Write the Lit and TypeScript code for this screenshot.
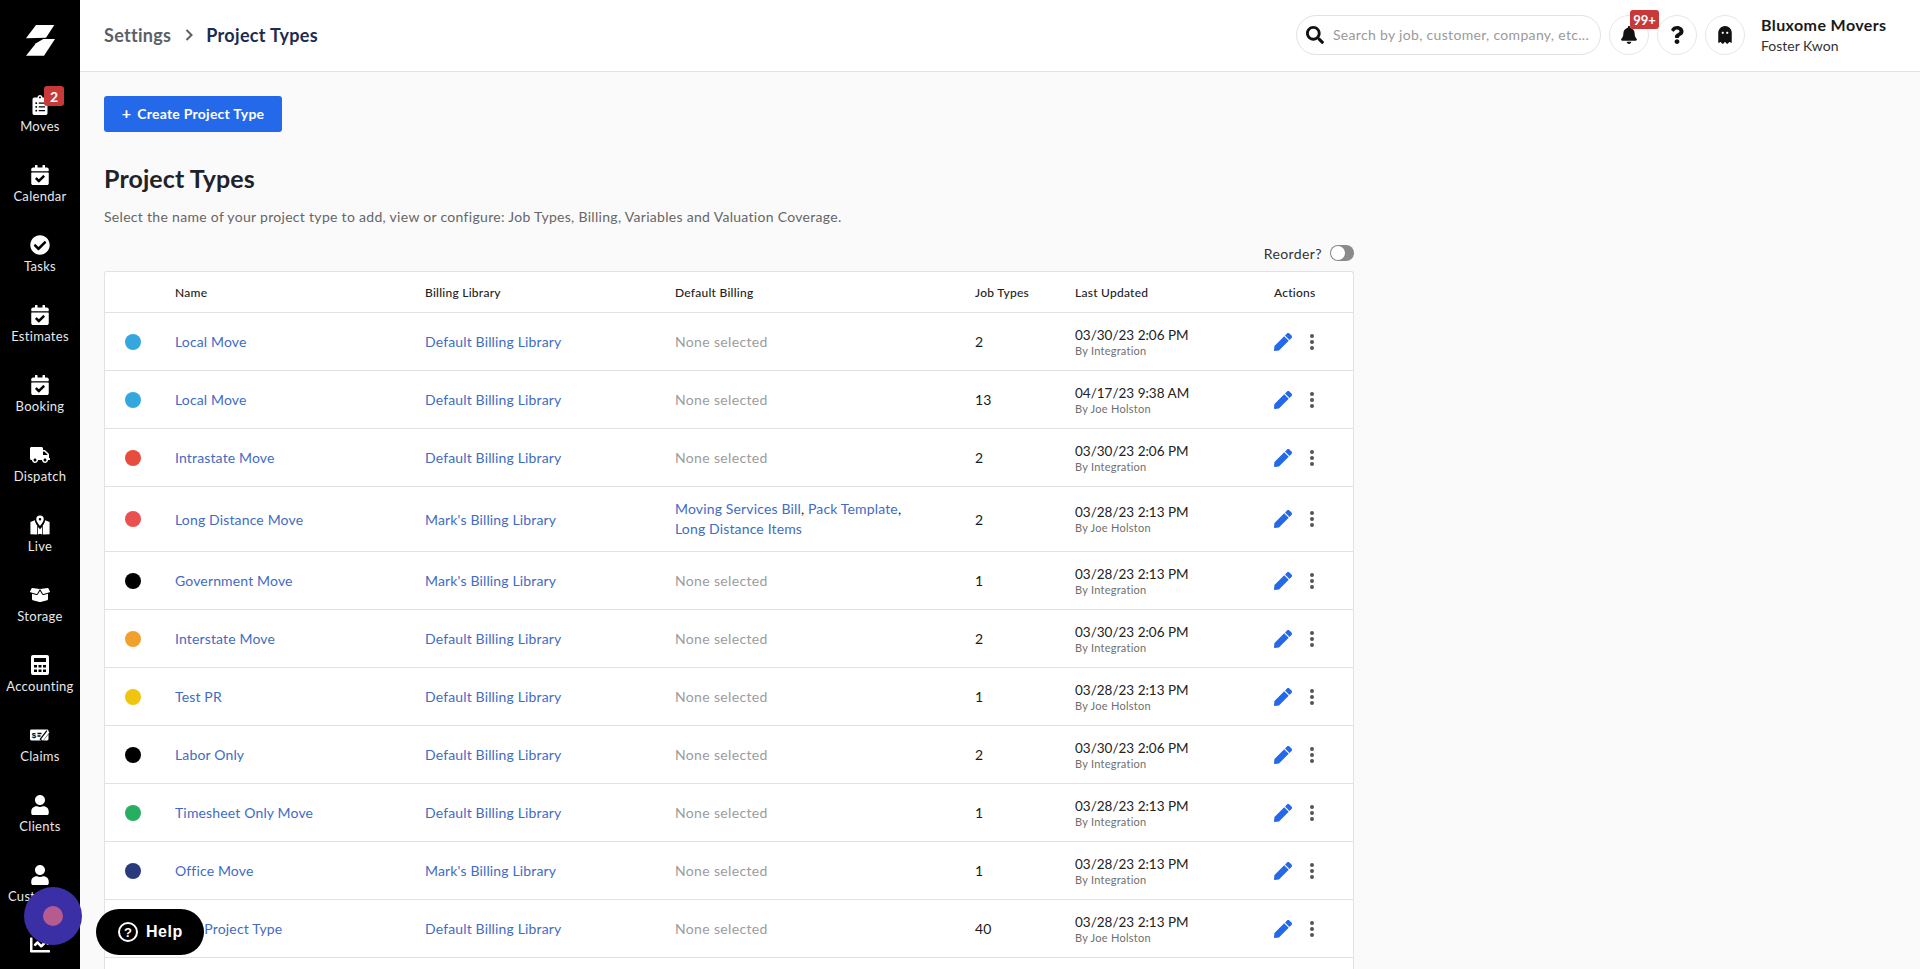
import { LitElement, html, css } from 'lit';
import { customElement } from 'lit/decorators.js';

const icon = (vb: string, d: string) => html`<svg viewBox=${vb} fill="currentColor" aria-hidden="true"><path d=${d}></path></svg>`;

const calendarCheck = icon('0 0 448 512', 'M436 160H12c-6.627 0-12-5.373-12-12v-36c0-26.51 21.49-48 48-48h48V12c0-6.627 5.373-12 12-12h40c6.627 0 12 5.373 12 12v52h128V12c0-6.627 5.373-12 12-12h40c6.627 0 12 5.373 12 12v52h48c26.51 0 48 21.49 48 48v36c0 6.627-5.373 12-12 12zM12 192h424c6.627 0 12 5.373 12 12v260c0 26.51-21.49 48-48 48H48c-26.51 0-48-21.49-48-48V204c0-6.627 5.373-12 12-12zm333.296 95.947l-28.169-28.398c-4.667-4.705-12.265-4.736-16.97-.068L194.12 364.665l-45.98-46.352c-4.667-4.705-12.266-4.736-16.971-.068l-28.397 28.17c-4.705 4.667-4.736 12.265-.068 16.97l82.601 83.269c4.667 4.705 12.265 4.736 16.97.068l142.953-141.805c4.705-4.667 4.736-12.265.068-16.97z');
const user = icon('0 0 448 512', 'M224 256c70.7 0 128-57.3 128-128S294.7 0 224 0 96 57.3 96 128s57.3 128 128 128zm89.6 32h-16.7c-22.2 10.2-46.9 16-72.9 16s-50.6-5.8-72.9-16h-16.7C60.2 288 0 348.2 0 422.4V464c0 26.5 21.5 48 48 48h352c26.5 0 48-21.5 48-48v-41.6c0-74.2-60.2-134.4-134.4-134.4z');
const pen = icon('0 0 512 512', 'M290.74 93.24l128.02 128.02-277.99 277.99-114.14 12.6C11.35 513.54-1.56 500.62.14 485.34l12.7-114.22 277.9-278.88zm207.2-19.06l-60.11-60.11c-18.75-18.75-49.16-18.75-67.91 0l-56.55 56.55 128.02 128.02 56.55-56.55c18.75-18.76 18.75-49.16 0-67.91z');
const search = icon('0 0 512 512', 'M505 442.7L405.3 343c-4.5-4.5-10.6-7-17-7H372c27.6-35.3 44-79.7 44-128C416 93.1 322.9 0 208 0S0 93.1 0 208s93.1 208 208 208c48.3 0 92.7-16.4 128-44v16.3c0 6.4 2.5 12.5 7 17l99.7 99.7c9.4 9.4 24.6 9.4 33.9 0l28.3-28.3c9.4-9.4 9.4-24.6.1-34zM208 336c-70.7 0-128-57.2-128-128 0-70.7 57.2-128 128-128 70.7 0 128 57.2 128 128 0 70.7-57.2 128-128 128z');
const bell = icon('0 0 448 512', 'M224 512c35.32 0 63.97-28.65 63.97-64H160.03c0 35.35 28.65 64 63.97 64zm215.39-149.71c-19.32-20.76-55.47-51.99-55.47-154.29 0-77.7-54.48-139.9-127.94-155.16V32c0-17.67-14.32-32-31.98-32s-31.98 14.33-31.98 32v20.84C118.56 68.1 64.08 130.3 64.08 208c0 102.3-36.15 133.53-55.47 154.29-6 6.45-8.66 14.16-8.61 21.71.11 16.4 12.98 32 32.1 32h383.8c19.12 0 32-15.6 32.1-32 .05-7.55-2.61-15.27-8.61-21.71z');
const question = icon('0 0 384 512', 'M202.021 0C122.202 0 70.503 32.703 29.914 91.026c-7.363 10.58-5.093 25.086 5.178 32.874l43.138 32.709c10.373 7.865 25.132 6.026 33.253-4.148 25.049-31.381 43.63-49.449 82.757-49.449 30.764 0 68.816 19.799 68.816 49.631 0 22.552-18.617 34.134-48.993 51.164-35.423 19.86-82.299 44.576-82.299 106.405V320c0 13.255 10.745 24 24 24h72.471c13.255 0 24-10.745 24-24v-5.773c0-42.86 125.268-44.645 125.268-160.627C377.504 66.256 286.902 0 202.021 0zM192 373.459c-38.196 0-69.271 31.075-69.271 69.271 0 38.195 31.075 69.27 69.271 69.27s69.271-31.075 69.271-69.271-31.075-69.27-69.271-69.27z');
const ghost = icon('0 0 384 512', 'M186.1.09C81.01 3.24 0 94.92 0 200.05v263.92c0 14.26 17.23 21.39 27.31 11.31l24.92-18.53c6.66-4.95 16-3.99 21.51 2.21l42.95 48.35c6.25 6.25 16.38 6.25 22.63 0l40.72-45.85c6.37-7.17 17.56-7.17 23.92 0l40.72 45.85c6.25 6.25 16.38 6.25 22.63 0l42.95-48.35c5.51-6.2 14.85-7.16 21.51-2.21l24.92 18.53c10.08 10.08 27.31 2.94 27.31-11.31V192C384 84 294.83-3.17 186.1.09zM128 224c-17.67 0-32-14.33-32-32s14.33-32 32-32 32 14.33 32 32-14.33 32-32 32zm128 0c-17.67 0-32-14.33-32-32s14.33-32 32-32 32 14.33 32 32-14.33 32-32 32z');

const claimsIcon = html`<svg viewBox="0 0 20 14" aria-hidden="true">
  <path fill="currentColor" d="M1.5 1.5h15.5c.8 0 1.5.6 1.5 1.4v8.2c0 .8-.7 1.4-1.5 1.4H1.5C.7 12.5 0 11.900 0 11.100V2.900C0 2.100.7 1.500 1.500 1.500z"></path>
  <text x="1.700" y="10" font-size="8" font-weight="700" font-family="Liberation Sans, sans-serif" fill="#000">$</text>
  <path stroke="#000" stroke-width="1.300" d="M7.500 5.500h4M7.500 8h3"></path>
  <path stroke="#000" stroke-width="4" d="M11 12.500L18 3.500"></path>
  <path stroke="currentColor" stroke-width="2.400" d="M12 12L18.500 3.500"></path>
</svg>`;

const mapIcon = html`<svg viewBox="0 0 24 24" fill="currentColor" aria-hidden="true">
  <path d="M12 0.500a4.500 4.500 0 0 0-4.500 4.500c0 2.800 4.500 8 4.500 8s4.500-5.200 4.500-8A4.500 4.500 0 0 0 12 .500zm0 3a1.500 1.500 0 1 1 0 3 1.500 1.500 0 0 1 0-3z"></path>
  <path d="M.500 8.500l5.200-2.200c.4 2.400 1.800 5 3 6.600V23.500L.500 23zM9.600 14.300c.9 1.200 1.800 2.200 2.400 2.800.6-.6 1.500-1.600 2.400-2.800v9.200l-2.400-1-2.400 1zM15.300 12.900c1.200-1.600 2.600-4.200 3-6.600l5.200 2.200V23l-8.200.5z"></path>
</svg>`;

const nav = [
  { label: 'Moves', badge: '2', svg: icon('0 0 384 512', 'M336 64h-80c0-35.3-28.7-64-64-64s-64 28.7-64 64H48C21.5 64 0 85.5 0 112v352c0 26.5 21.5 48 48 48h288c26.500 0 48-21.500 48-48V112c0-26.500-21.500-48-48-48zM96 424c-13.300 0-24-10.700-24-24s10.700-24 24-24 24 10.700 24 24-10.700 24-24 24zm0-96c-13.300 0-24-10.700-24-24s10.700-24 24-24 24 10.700 24 24-10.700 24-24 24zm0-96c-13.300 0-24-10.700-24-24s10.700-24 24-24 24 10.700 24 24-10.700 24-24 24zm96-192c13.300 0 24 10.700 24 24s-10.700 24-24 24-24-10.700-24-24 10.700-24 24-24zm128 368c0 4.400-3.600 8-8 8H168c-4.400 0-8-3.600-8-8v-16c0-4.400 3.600-8 8-8h144c4.400 0 8 3.600 8 8v16zm0-96c0 4.400-3.600 8-8 8H168c-4.400 0-8-3.600-8-8v-16c0-4.400 3.600-8 8-8h144c4.400 0 8 3.600 8 8v16zm0-96c0 4.400-3.600 8-8 8H168c-4.400 0-8-3.600-8-8v-16c0-4.400 3.600-8 8-8h144c4.400 0 8 3.600 8 8v16z') },
  { label: 'Calendar', svg: calendarCheck },
  { label: 'Tasks', svg: icon('0 0 512 512', 'M504 256c0 136.967-111.033 248-248 248S8 392.967 8 256 119.033 8 256 8s248 111.033 248 248zM227.314 387.314l184-184c6.248-6.248 6.248-16.379 0-22.627l-22.627-22.627c-6.248-6.249-16.379-6.249-22.628 0L216 308.118l-70.059-70.059c-6.248-6.248-16.379-6.248-22.628 0l-22.627 22.627c-6.248 6.248-6.248 16.379 0 22.627l104 104c6.249 6.25 16.379 6.25 22.628.001z') },
  { label: 'Estimates', svg: calendarCheck },
  { label: 'Booking', svg: calendarCheck },
  { label: 'Dispatch', svg: icon('0 0 640 512', 'M624 352h-16V243.9c0-12.7-5.1-24.9-14.1-33.9L494 110.100c-9-9-21.200-14.100-33.900-14.100H416V48c0-26.500-21.500-48-48-48H48C21.500 0 0 21.500 0 48v320c0 26.500 21.500 48 48 48h16c0 53 43 96 96 96s96-43 96-96h128c0 53 43 96 96 96s96-43 96-96h48c8.800 0 16-7.200 16-16v-32c0-8.800-7.200-16-16-16zM160 464c-26.500 0-48-21.500-48-48s21.500-48 48-48 48 21.500 48 48-21.500 48-48 48zm320 0c-26.500 0-48-21.500-48-48s21.500-48 48-48 48 21.500 48 48-21.500 48-48 48zm80-208H416V144h44.100l99.900 99.900V256z') },
  { label: 'Live', svg: mapIcon },
  { label: 'Storage', svg: icon('0 0 640 512', 'M425.700 256c-16.900 0-32.800-9-41.400-23.400L320 126l-64.200 106.600c-8.700 14.500-24.600 23.500-41.500 23.500-4.500 0-9-.6-13.300-1.900L64 215v178c0 14.700 10 27.500 24.200 31l216.200 54.100c10.200 2.500 20.900 2.500 31 0L551.800 424c14.200-3.600 24.200-16.400 24.200-31V215l-137 39.100c-4.300 1.300-8.800 1.900-13.300 1.900zm212.600-112.200L586.800 41c-3.100-6.200-9.800-9.800-16.700-8.900L320 64l91.700 152.100c3.800 6.300 11.400 9.300 18.500 7.300l197.900-56.500c9.900-2.900 14.700-13.900 10.200-23.100zM53.200 41L1.700 143.800c-4.600 9.200.3 20.200 10.100 23l197.900 56.500c7.100 2 14.700-1 18.500-7.300L320 64 69.800 32.100c-6.900-.8-13.500 2.700-16.600 8.900z') },
  { label: 'Accounting', svg: html`<svg viewBox="0 0 18 20" fill="currentColor" aria-hidden="true"><path fill-rule="evenodd" d="M2 0h14a2 2 0 0 1 2 2v16a2 2 0 0 1-2 2H2a2 2 0 0 1-2-2V2a2 2 0 0 1 2-2zM3 3v4h12V3zM3 10v2.500h3V10zM7.500 10v2.500h3V10zM12 10v2.500h3V10zM3 14.500V17h3v-2.500zM7.500 14.500V17h3v-2.500zM12 14.500V17h3v-2.500z"></path></svg>` },
  { label: 'Claims', svg: claimsIcon },
  { label: 'Clients', svg: user },
  { label: 'Customers', svg: user },
  { label: '', svg: icon('0 0 512 512', 'M496 384H64V80c0-8.840-7.160-16-16-16H16C7.160 64 0 71.160 0 80v336c0 17.670 14.330 32 32 32h464c8.840 0 16-7.160 16-16v-32c0-8.840-7.160-16-16-16zM464 96H345.940c-21.380 0-32.090 25.850-16.970 40.970l32.400 32.400L288 242.750l-73.370-73.370c-12.500-12.500-32.760-12.500-45.250 0l-68.690 68.690c-6.250 6.250-6.250 16.380 0 22.630l22.620 22.620c6.250 6.250 16.380 6.250 22.630 0L192 237.250l73.370 73.370c12.500 12.500 32.760 12.500 45.250 0l96-96 32.400 32.400c15.120 15.120 40.970 4.410 40.970-16.970V112c.01-8.840-7.150-16-15.990-16z') },
];

const INT = 'By Integration';
const JOE = 'By Joe Holston';
const DEF = 'Default Billing Library';
const MARK = "Mark's Billing Library";

const rows = [
  { color: '#34a8de', name: 'Local Move', lib: DEF, jobs: '2', date: '03/30/23 2:06 PM', by: INT },
  { color: '#34a8de', name: 'Local Move', lib: DEF, jobs: '13', date: '04/17/23 9:38 AM', by: JOE },
  { color: '#e74c3c', name: 'Intrastate Move', lib: DEF, jobs: '2', date: '03/30/23 2:06 PM', by: INT },
  { color: '#eb5050', name: 'Long Distance Move', lib: MARK, jobs: '2', date: '03/28/23 2:13 PM', by: JOE, billing: ['Moving Services Bill', 'Pack Template', 'Long Distance Items'] },
  { color: '#000000', name: 'Government Move', lib: MARK, jobs: '1', date: '03/28/23 2:13 PM', by: INT },
  { color: '#f2a02d', name: 'Interstate Move', lib: DEF, jobs: '2', date: '03/30/23 2:06 PM', by: INT },
  { color: '#f1c40f', name: 'Test PR', lib: DEF, jobs: '1', date: '03/28/23 2:13 PM', by: JOE },
  { color: '#000000', name: 'Labor Only', lib: DEF, jobs: '2', date: '03/30/23 2:06 PM', by: INT },
  { color: '#27ae60', name: 'Timesheet Only Move', lib: DEF, jobs: '1', date: '03/28/23 2:13 PM', by: INT },
  { color: '#2a3b7d', name: 'Office Move', lib: MARK, jobs: '1', date: '03/28/23 2:13 PM', by: INT },
  { color: '#2a3b7d', name: 'Test Project Type', lib: DEF, jobs: '40', date: '03/28/23 2:13 PM', by: JOE },
];

@customElement('app-root')
export class AppRoot extends LitElement {
  static override styles = css`
    :host {
      display: flex;
      height: 100vh;
      overflow: hidden;
      position: relative;
      font-family: Lato, 'Noto Sans', sans-serif;
      color: #1a1a1a;
      background: #fafafa;
    }
    svg { display: block; width: 100%; height: 100%; }
    a { color: #3f6cc4; text-decoration: none; }

    .sidebar {
      flex: 0 0 80px;
      background: #000;
      color: #fff;
      overflow: hidden;
    }
    .logo {
      height: 71px;
      box-sizing: border-box;
      padding-top: 9px;
      display: flex;
      align-items: center;
      justify-content: center;
    }
    .logo svg { width: 29px; height: 31px; }
    .nav { padding-top: 15px; }
    .nav-item {
      height: 70px;
      display: flex;
      flex-direction: column;
      align-items: center;
      padding-top: 9px;
      box-sizing: border-box;
      font-size: 13px;
      line-height: 15px;
      letter-spacing: 0.3px;
      color: #e8e8e8;
    }
    .nav-icon { position: relative; width: 20px; height: 20px; color: #fff; margin-bottom: 4px; }
    .nav-badge {
      position: absolute;
      left: 14px;
      top: -9px;
      width: 20px;
      height: 20px;
      border-radius: 3px;
      background: #c83a3a;
      color: #fff;
      font-size: 14px;
      font-weight: 700;
      display: flex;
      align-items: center;
      justify-content: center;
      letter-spacing: 0;
    }

    .main { flex: 1; min-width: 0; display: flex; flex-direction: column; }
    .header {
      flex: 0 0 72px;
      box-sizing: border-box;
      background: #fff;
      border-bottom: 1px solid #e2e2e2;
      display: flex;
      align-items: center;
      padding: 0 32px 1px 24px;
    }
    .crumbs { display: flex; align-items: center; font-size: 18px; font-weight: 700; letter-spacing: 0.3px; flex: 1; }
    .crumb-parent { color: #5c5f66; }
    .crumb-sep { width: 8px; height: 12px; margin: 0 13px 0 14px; }
    .crumb-current { color: #1b2c4f; }
    .search {
      width: 305px;
      height: 40px;
      box-sizing: border-box;
      border: 1px solid #e2e2e2;
      border-radius: 20px;
      display: flex;
      align-items: center;
      padding-left: 9px;
      gap: 9px;
      font-size: 14px;
      letter-spacing: 0.32px;
      color: #9a9a9a;
      white-space: nowrap;
    }
    .search-text { padding-bottom: 2px; }
    .search-icon { width: 18px; height: 18px; color: #111; flex: none; }
    .round {
      position: relative;
      width: 40px;
      height: 40px;
      box-sizing: border-box;
      border: 1px solid #e6e6e6;
      border-radius: 50%;
      margin-left: 8px;
      display: flex;
      align-items: center;
      justify-content: center;
      color: #111;
    }
    .round span.ic { width: 16px; height: 18px; display: block; }
    .round-badge {
      position: absolute;
      left: 20px;
      top: -6px;
      width: 29px;
      height: 19px;
      border-radius: 3px;
      background: #c83a3a;
      color: #fff;
      font-size: 13px;
      font-weight: 700;
      display: flex;
      align-items: center;
      justify-content: center;
    }
    .who { margin-left: 16px; width: 127px; white-space: nowrap; }
    .company { font-size: 16px; font-weight: 700; line-height: 20px; letter-spacing: 0.4px; color: #1a1a1a; }
    .person { font-size: 14px; line-height: 21px; color: #333; }

    .content { flex: 1; overflow: hidden; padding: 24px 24px 0; }
    .create {
      width: 178px;
      height: 36px;
      box-sizing: border-box;
      padding-bottom: 2px;
      border-radius: 3px;
      background: #2469ea;
      color: #fff;
      font-size: 14px;
      font-weight: 700;
      letter-spacing: 0.25px;
      display: flex;
      align-items: center;
      justify-content: center;
      gap: 6px;
    }
    .plus { font-size: 16px; line-height: 1; }
    h1 { margin: 29px 0 0; font-size: 25px; line-height: 34px; font-weight: 700; color: #1f2329; letter-spacing: 0.1px; }
    .lead { margin: 12px 0 0; font-size: 14px; line-height: 20px; letter-spacing: 0.3px; color: #666; }
    .reorder-row {
      width: 1250px;
      margin-top: 16px;
      height: 20px;
      display: flex;
      align-items: center;
      justify-content: flex-end;
      gap: 8px;
      font-size: 14px;
      letter-spacing: 0.4px;
      color: #333;
    }
    .toggle { position: relative; width: 24px; height: 16px; border-radius: 8px; background: #8a8a8a; }
    .knob {
      position: absolute;
      left: 1px;
      top: 1px;
      width: 14px;
      height: 14px;
      border-radius: 50%;
      background: #fff;
    }

    .table {
      width: 1250px;
      margin-top: 8px;
      box-sizing: border-box;
      background: #fff;
      border: 1px solid #e2e2e2;
      border-bottom: none;
      border-radius: 3px 3px 0 0;
    }
    .row {
      display: grid;
      grid-template-columns: 70px 250px 250px 300px 100px 199px 1fr;
      align-items: center;
      min-height: 58px;
      box-sizing: border-box;
      border-bottom: 1px solid #e2e2e2;
      font-size: 14px;
      letter-spacing: 0.15px;
      color: #1a1a1a;
    }
    .row.head { min-height: 41px; font-size: 12px; font-weight: 500; letter-spacing: 0.25px; color: #222; }
    .row.tall { min-height: 65px; }
    .row.empty { border-bottom: none; }
    .dot { width: 16px; height: 16px; border-radius: 50%; margin-left: 20px; }
    .none { color: #9c9c9c; letter-spacing: 0.35px; }
    .billing { line-height: 20px; padding-right: 60px; }
    .date { font-size: 13.500px; letter-spacing: 0; line-height: 18px; color: #222; }
    .by { font-size: 11px; letter-spacing: 0.25px; line-height: 14px; color: #6f6f6f; }
    .actions { display: flex; align-items: center; }
    .edit { width: 18px; height: 18px; color: #2469ea; margin-right: 18px; }
    .more { display: flex; flex-direction: column; gap: 2px; width: 4px; }
    .more i { display: block; width: 4px; height: 4px; border-radius: 50%; background: #555; }

    .beacon {
      position: absolute;
      left: 24px;
      top: 887px;
      width: 58px;
      height: 58px;
      border-radius: 50%;
      background: #3b2fa6;
      display: flex;
      align-items: center;
      justify-content: center;
    }
    .beacon i { display: block; width: 20px; height: 20px; border-radius: 50%; background: #b65b90; }
    .help {
      position: absolute;
      left: 96px;
      top: 909px;
      width: 108px;
      height: 46px;
      box-sizing: border-box;
      border-radius: 23px;
      background: #000;
      color: #fff;
      display: flex;
      align-items: center;
      padding-left: 22px;
      gap: 8px;
      font-family: 'Liberation Sans', Arial, sans-serif;
      font-size: 16px;
      font-weight: 700;
      letter-spacing: 0.5px;
    }
    .help-q {
      width: 20px;
      height: 20px;
      box-sizing: border-box;
      border: 2px solid #fff;
      border-radius: 50%;
      font-size: 13px;
      letter-spacing: 0;
      display: flex;
      align-items: center;
      justify-content: center;
    }
  `;

  renderRow(r: (typeof rows)[number]) {
    const billing = (r as { billing?: string[] }).billing;
    return html`
      <div class="row ${billing ? 'tall' : ''}">
        <div class="dot" style="background:${r.color}"></div>
        <a>${r.name}</a>
        <a>${r.lib}</a>
        ${billing
          ? html`<div class="billing">${billing.map((b, i) => html`<a>${b}</a>${i < billing.length - 1 ? ', ' : ''}`)}</div>`
          : html`<div class="none">None selected</div>`}
        <div>${r.jobs}</div>
        <div>
          <div class="date">${r.date}</div>
          <div class="by">${r.by}</div>
        </div>
        <div class="actions">
          <div class="edit">${pen}</div>
          <div class="more"><i></i><i></i><i></i></div>
        </div>
      </div>
    `;
  }

  override render() {
    return html`
      <aside class="sidebar">
        <div class="logo">
          <svg viewBox="0 0 29 31" fill="#fff" aria-hidden="true">
            <path d="M10 0H28.300L20 12.700L0 13.300Z"></path>
            <path d="M17.300 14H29L18 30.700H0L10 18.300Z"></path>
          </svg>
        </div>
        <nav class="nav">
          ${nav.map(n => html`
            <div class="nav-item">
              <div class="nav-icon">
                ${n.svg}
                ${n.badge ? html`<span class="nav-badge">${n.badge}</span>` : ''}
              </div>
              <span>${n.label}</span>
            </div>
          `)}
        </nav>
      </aside>
      <div class="main">
        <header class="header">
          <div class="crumbs">
            <span class="crumb-parent">Settings</span>
            <svg class="crumb-sep" viewBox="0 0 8 12" fill="none" stroke="#5c5f66" stroke-width="2"><path d="M1.500 1L6.500 6L1.500 11"></path></svg>
            <span class="crumb-current">Project Types</span>
          </div>
          <div class="search">
            <span class="search-icon">${search}</span>
            <span class="search-text">Search by job, customer, company, etc...</span>
          </div>
          <div class="round">
            <span class="ic">${bell}</span>
            <span class="round-badge">99+</span>
          </div>
          <div class="round"><span class="ic">${question}</span></div>
          <div class="round"><span class="ic">${ghost}</span></div>
          <div class="who">
            <div class="company">Bluxome Movers</div>
            <div class="person">Foster Kwon</div>
          </div>
        </header>
        <main class="content">
          <div class="create"><span class="plus">+</span><span>Create Project Type</span></div>
          <h1>Project Types</h1>
          <p class="lead">Select the name of your project type to add, view or configure: Job Types, Billing, Variables and Valuation Coverage.</p>
          <div class="reorder-row">
            <span>Reorder?</span>
            <div class="toggle"><div class="knob"></div></div>
          </div>
          <div class="table">
            <div class="row head">
              <div></div>
              <div>Name</div>
              <div>Billing Library</div>
              <div>Default Billing</div>
              <div>Job Types</div>
              <div>Last Updated</div>
              <div>Actions</div>
            </div>
            ${rows.map(r => this.renderRow(r))}
            <div class="row empty"></div>
          </div>
        </main>
      </div>
      <div class="beacon"><i></i></div>
      <div class="help"><span class="help-q">?</span><span>Help</span></div>
    `;
  }
}
